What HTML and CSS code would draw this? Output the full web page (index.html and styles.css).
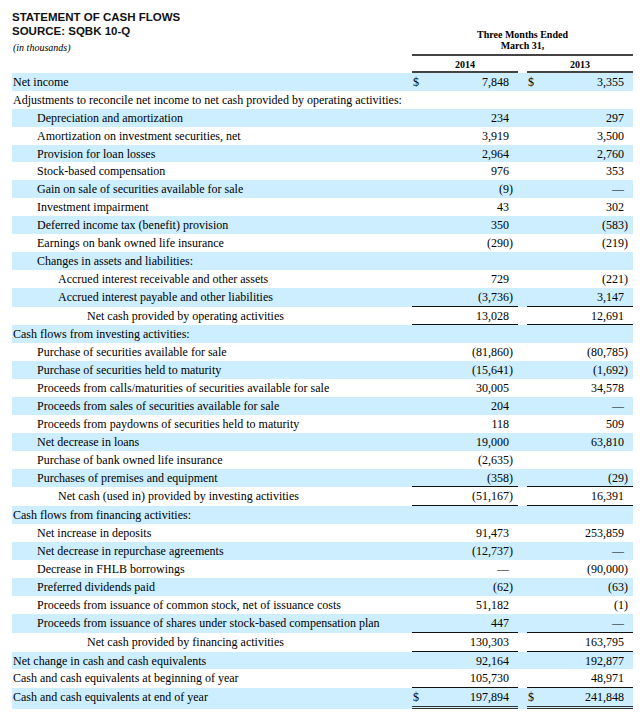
FILE: index.html
```html
<!DOCTYPE html>
<html lang="en">
<head>
<meta charset="utf-8">
<title>Statement of Cash Flows</title>
<link rel="stylesheet" href="styles.css">
</head>
<body>
<div class="page">
  <div class="head">
    <div class="title">
      <div class="t">STATEMENT OF CASH FLOWS</div>
      <div class="t">SOURCE: SQBK 10-Q</div>
      <div class="units">(in thousands)</div>
    </div>
    <div class="colhead">
      <div class="period"><div>Three Months Ended</div><div>March 31,</div></div>
      <div class="years"><div class="yh">2014</div><div class="yh">2013</div></div>
    </div>
  </div>

  <div class="rows">
    <div class="row alt"><div class="lbl l0">Net income</div><div class="yr"><span class="cur">$</span><span class="n">7,848</span><span class="p"></span></div><div></div><div class="yr"><span class="cur">$</span><span class="n">3,355</span><span class="p"></span></div></div>
    <div class="row"><div class="lbl l0">Adjustments to reconcile net income to net cash provided by operating activities:</div><div class="yr"></div><div></div><div class="yr"></div></div>
    <div class="row alt"><div class="lbl l1">Depreciation and amortization</div><div class="yr"><span class="n">234</span><span class="p"></span></div><div></div><div class="yr"><span class="n">297</span><span class="p"></span></div></div>
    <div class="row"><div class="lbl l1">Amortization on investment securities, net</div><div class="yr"><span class="n">3,919</span><span class="p"></span></div><div></div><div class="yr"><span class="n">3,500</span><span class="p"></span></div></div>
    <div class="row alt"><div class="lbl l1">Provision for loan losses</div><div class="yr"><span class="n">2,964</span><span class="p"></span></div><div></div><div class="yr"><span class="n">2,760</span><span class="p"></span></div></div>
    <div class="row"><div class="lbl l1">Stock-based compensation</div><div class="yr"><span class="n">976</span><span class="p"></span></div><div></div><div class="yr"><span class="n">353</span><span class="p"></span></div></div>
    <div class="row alt"><div class="lbl l1">Gain on sale of securities available for sale</div><div class="yr"><span class="n">(9</span><span class="p">)</span></div><div></div><div class="yr"><span class="n">—</span><span class="p"></span></div></div>
    <div class="row"><div class="lbl l1">Investment impairment</div><div class="yr"><span class="n">43</span><span class="p"></span></div><div></div><div class="yr"><span class="n">302</span><span class="p"></span></div></div>
    <div class="row alt"><div class="lbl l1">Deferred income tax (benefit) provision</div><div class="yr"><span class="n">350</span><span class="p"></span></div><div></div><div class="yr"><span class="n">(583</span><span class="p">)</span></div></div>
    <div class="row"><div class="lbl l1">Earnings on bank owned life insurance</div><div class="yr"><span class="n">(290</span><span class="p">)</span></div><div></div><div class="yr"><span class="n">(219</span><span class="p">)</span></div></div>
    <div class="row alt"><div class="lbl l1">Changes in assets and liabilities:</div><div class="yr"></div><div></div><div class="yr"></div></div>
    <div class="row"><div class="lbl l2">Accrued interest receivable and other assets</div><div class="yr"><span class="n">729</span><span class="p"></span></div><div></div><div class="yr"><span class="n">(221</span><span class="p">)</span></div></div>
    <div class="row alt"><div class="lbl l2">Accrued interest payable and other liabilities</div><div class="yr b"><span class="n">(3,736</span><span class="p">)</span></div><div></div><div class="yr b"><span class="n">3,147</span><span class="p"></span></div></div>
    <div class="row"><div class="lbl l3">Net cash provided by operating activities</div><div class="yr b"><span class="n">13,028</span><span class="p"></span></div><div></div><div class="yr b"><span class="n">12,691</span><span class="p"></span></div></div>
    <div class="row alt"><div class="lbl l0">Cash flows from investing activities:</div><div class="yr"></div><div></div><div class="yr"></div></div>
    <div class="row"><div class="lbl l1">Purchase of securities available for sale</div><div class="yr"><span class="n">(81,860</span><span class="p">)</span></div><div></div><div class="yr"><span class="n">(80,785</span><span class="p">)</span></div></div>
    <div class="row alt"><div class="lbl l1">Purchase of securities held to maturity</div><div class="yr"><span class="n">(15,641</span><span class="p">)</span></div><div></div><div class="yr"><span class="n">(1,692</span><span class="p">)</span></div></div>
    <div class="row"><div class="lbl l1">Proceeds from calls/maturities of securities available for sale</div><div class="yr"><span class="n">30,005</span><span class="p"></span></div><div></div><div class="yr"><span class="n">34,578</span><span class="p"></span></div></div>
    <div class="row alt"><div class="lbl l1">Proceeds from sales of securities available for sale</div><div class="yr"><span class="n">204</span><span class="p"></span></div><div></div><div class="yr"><span class="n">—</span><span class="p"></span></div></div>
    <div class="row"><div class="lbl l1">Proceeds from paydowns of securities held to maturity</div><div class="yr"><span class="n">118</span><span class="p"></span></div><div></div><div class="yr"><span class="n">509</span><span class="p"></span></div></div>
    <div class="row alt"><div class="lbl l1">Net decrease in loans</div><div class="yr"><span class="n">19,000</span><span class="p"></span></div><div></div><div class="yr"><span class="n">63,810</span><span class="p"></span></div></div>
    <div class="row"><div class="lbl l1">Purchase of bank owned life insurance</div><div class="yr"><span class="n">(2,635</span><span class="p">)</span></div><div></div><div class="yr"></div></div>
    <div class="row alt"><div class="lbl l1">Purchases of premises and equipment</div><div class="yr b"><span class="n">(358</span><span class="p">)</span></div><div></div><div class="yr b"><span class="n">(29</span><span class="p">)</span></div></div>
    <div class="row"><div class="lbl l2">Net cash (used in) provided by investing activities</div><div class="yr b"><span class="n">(51,167</span><span class="p">)</span></div><div></div><div class="yr b"><span class="n">16,391</span><span class="p"></span></div></div>
    <div class="row alt"><div class="lbl l0">Cash flows from financing activities:</div><div class="yr"></div><div></div><div class="yr"></div></div>
    <div class="row"><div class="lbl l1">Net increase in deposits</div><div class="yr"><span class="n">91,473</span><span class="p"></span></div><div></div><div class="yr"><span class="n">253,859</span><span class="p"></span></div></div>
    <div class="row alt"><div class="lbl l1">Net decrease in repurchase agreements</div><div class="yr"><span class="n">(12,737</span><span class="p">)</span></div><div></div><div class="yr"><span class="n">—</span><span class="p"></span></div></div>
    <div class="row"><div class="lbl l1">Decrease in FHLB borrowings</div><div class="yr"><span class="n">—</span><span class="p"></span></div><div></div><div class="yr"><span class="n">(90,000</span><span class="p">)</span></div></div>
    <div class="row alt"><div class="lbl l1">Preferred dividends paid</div><div class="yr"><span class="n">(62</span><span class="p">)</span></div><div></div><div class="yr"><span class="n">(63</span><span class="p">)</span></div></div>
    <div class="row"><div class="lbl l1">Proceeds from issuance of common stock, net of issuance costs</div><div class="yr"><span class="n">51,182</span><span class="p"></span></div><div></div><div class="yr"><span class="n">(1</span><span class="p">)</span></div></div>
    <div class="row alt"><div class="lbl l1">Proceeds from issuance of shares under stock-based compensation plan</div><div class="yr b"><span class="n">447</span><span class="p"></span></div><div></div><div class="yr b"><span class="n">—</span><span class="p"></span></div></div>
    <div class="row"><div class="lbl l3">Net cash provided by financing activities</div><div class="yr b"><span class="n">130,303</span><span class="p"></span></div><div></div><div class="yr b"><span class="n">163,795</span><span class="p"></span></div></div>
    <div class="row alt"><div class="lbl l0">Net change in cash and cash equivalents</div><div class="yr"><span class="n">92,164</span><span class="p"></span></div><div></div><div class="yr"><span class="n">192,877</span><span class="p"></span></div></div>
    <div class="row"><div class="lbl l0">Cash and cash equivalents at beginning of year</div><div class="yr b"><span class="n">105,730</span><span class="p"></span></div><div></div><div class="yr b"><span class="n">48,971</span><span class="p"></span></div></div>
    <div class="row alt"><div class="lbl l0">Cash and cash equivalents at end of year</div><div class="yr d"><span class="cur">$</span><span class="n">197,894</span><span class="p"></span></div><div></div><div class="yr d"><span class="cur">$</span><span class="n">241,848</span><span class="p"></span></div></div>
  </div>
</div>
</body>
</html>
```

FILE: styles.css
```css
html, body {
  margin: 0;
  padding: 0;
  background: #ffffff;
}

.page {
  width: 621px;
  padding-left: 12px;
  color: #000;
}

.head {
  display: grid;
  grid-template-columns: 400px 221px;
  height: 73px;
}

.title {
  padding-top: 10px;
}

.t {
  font-family: "Liberation Sans", Arial, sans-serif;
  font-weight: bold;
  font-size: 11.5px;
  line-height: 14px;
  color: #111;
}

.units {
  margin-top: 3.6px;
  padding-left: 1px;
  font-family: "Liberation Serif", "Times New Roman", serif;
  font-style: italic;
  font-size: 10px;
  line-height: 12px;
}

.colhead {
  padding-top: 29px;
  font-family: "Liberation Serif", "Times New Roman", serif;
  font-weight: bold;
}

.period {
  font-size: 10px;
  line-height: 11.1px;
  text-align: center;
  padding-bottom: 2.8px;
  border-bottom: 2px solid #444;
}

.years {
  display: grid;
  grid-template-columns: 106px 106px;
  column-gap: 9px;
}

.yh {
  height: 12px;
  padding-top: 3px;
  font-size: 10px;
  line-height: 12px;
  text-align: center;
  border-bottom: 2px solid #444;
}

.rows {
  font-family: "Liberation Serif", "Times New Roman", serif;
  font-size: 12px;
}

.row {
  display: grid;
  grid-template-columns: 400px 106px 9px 106px;
}

.row.alt {
  background: #cceeff;
}

.row > div {
  height: 16.9px;
  padding-top: 1px;
  line-height: 16.9px;
  white-space: nowrap;
}

.l0 { padding-left: 1px; }
.l1 { padding-left: 25px; }
.l2 { padding-left: 46px; }
.l3 { padding-left: 75px; }

.row > .yr {
  display: flex;
}

.cur {
  padding-left: 1px;
}

.n {
  flex: 1;
  text-align: right;
}

.p {
  width: 9px;
}

.row > .yr.b {
  border-bottom: 1px solid #111;
}

.row > .yr.d {
  border-bottom: 3px double #333;
}
```
